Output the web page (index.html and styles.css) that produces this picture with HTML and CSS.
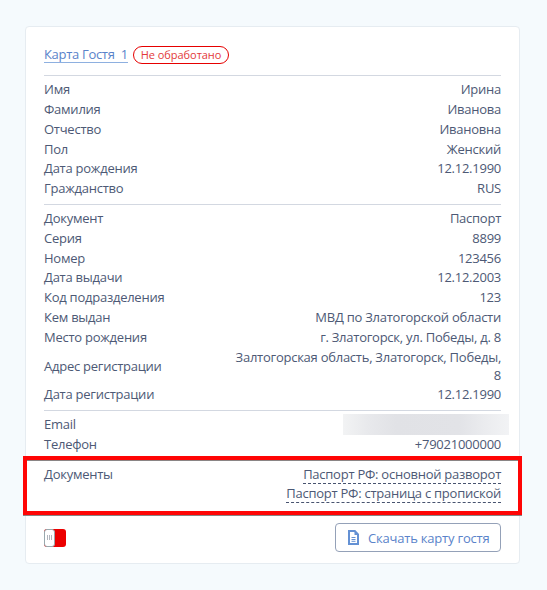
FILE: index.html
```html
<!DOCTYPE html>
<html lang="ru">
<head>
<meta charset="utf-8">
<title>Карта Гостя</title>
<link rel="stylesheet" href="styles.css">
</head>
<body>
<main class="card">
  <header class="head">
    <a class="title">Карта Гостя&nbsp; 1</a>
    <span class="badge">Не обработано</span>
  </header>
  <section class="group person">
    <div class="row"><span>Имя</span><span class="value">Ирина</span></div>
    <div class="row"><span>Фамилия</span><span class="value">Иванова</span></div>
    <div class="row"><span>Отчество</span><span class="value">Ивановна</span></div>
    <div class="row"><span>Пол</span><span class="value">Женский</span></div>
    <div class="row"><span>Дата рождения</span><span class="value">12.12.1990</span></div>
    <div class="row"><span>Гражданство</span><span class="value">RUS</span></div>
  </section>
  <section class="group passport">
    <div class="row"><span>Документ</span><span class="value">Паспорт</span></div>
    <div class="row"><span>Серия</span><span class="value">8899</span></div>
    <div class="row"><span>Номер</span><span class="value">123456</span></div>
    <div class="row"><span>Дата выдачи</span><span class="value">12.12.2003</span></div>
    <div class="row"><span>Код подразделения</span><span class="value">123</span></div>
    <div class="row"><span>Кем выдан</span><span class="value">МВД по Златогорской области</span></div>
    <div class="row"><span>Место рождения</span><span class="value">г. Златогорск, ул. Победы, д. 8</span></div>
    <div class="row tall"><span>Адрес регистрации</span><span class="value">Залтогорская область, Златогорск, Победы, 8</span></div>
    <div class="row"><span>Дата регистрации</span><span class="value">12.12.1990</span></div>
  </section>
  <section class="group contacts">
    <div class="row"><span>Email</span><span class="masked"></span></div>
    <div class="row"><span>Телефон</span><span class="value">+79021000000</span></div>
  </section>
  <section class="group docs">
    <span>Документы</span>
    <div class="links">
      <a class="doc">Паспорт РФ: основной разворот</a>
      <a class="doc">Паспорт РФ: страница с пропиской</a>
    </div>
    <div class="highlight"></div>
  </section>
  <footer class="foot">
    <span class="toggle"><span class="knob"><i></i><i></i><i></i></span></span>
    <button class="download">
      <svg width="11" height="15" viewBox="0 0 11 15" fill="none" stroke="#6491d4">
        <path d="M1 1H6.8L10 4.4V14H1Z" stroke-width="2"/>
        <path d="M6.5 0.5V5H10.5Z" fill="#6491d4" stroke="none"/>
        <path d="M3.5 7.5H7.5M3.5 9.5H7.5M3.5 11.3H7.5" stroke-width="1"/>
      </svg>
      <span>Скачать карту гостя</span>
    </button>
  </footer>
</main>
</body>
</html>
```
FILE: styles.css
```css
* { box-sizing: border-box; }
body {
  margin: 0;
  padding: 26px 27px 26px 25px;
  background: #f5fafd;
  font: 13px/18px "Open Sans", sans-serif;
  letter-spacing: -0.25px;
  color: #4d5975;
}
.card {
  height: 538px;
  padding: 0 18px;
  background: #fff;
  border: 1px solid #e6ecf1;
  border-radius: 4px;
}
.head {
  display: flex;
  align-items: flex-start;
  height: 48px;
  padding-top: 18px;
}
.title {
  height: 18px;
  margin-right: 5px;
  border-bottom: 1px solid #8eb0e0;
  letter-spacing: -0.31px;
  color: #5a83ca;
  white-space: nowrap;
}
.badge {
  height: 18px;
  margin-top: 1px;
  padding: 0 7px;
  border: 1px solid #e60000;
  border-radius: 9px;
  font-size: 11px;
  line-height: 16px;
  letter-spacing: -0.05px;
  color: #e33a3a;
}
.group {
  padding-top: 4px;
  border-top: 1px solid #d3d8e1;
}
.person { height: 129px; padding-top: 4.3px; }
.passport { height: 206px; }
.contacts { height: 50px; }
.row {
  display: flex;
  justify-content: space-between;
  align-items: center;
  min-height: 19.75px;
  padding-bottom: 1.75px;
}
.tall { padding: 0.75px 0 1px; }
.value {
  max-width: 270px;
  text-align: right;
}
.masked {
  width: 166px;
  height: 21px;
  margin: -1px -8px -2px 0;
  background: linear-gradient(90deg, #f2f3f4, #e8e9ec 15%, #e1e2e6 32%, #e2e3e7 70%, #ebecef 86%, #f2f3f5);
}
.docs {
  position: relative;
  display: flex;
  justify-content: space-between;
  height: 63px;
}
.links {
  display: flex;
  flex-direction: column;
  align-items: flex-end;
}
.doc {
  height: 19px;
  border-bottom: 1px dashed #47536f;
}
.highlight {
  position: absolute;
  inset: -5px -21px auto;
  height: 59px;
  border: 4px solid #ff0505;
  box-shadow: 0 1px 0 #8a8585, inset 0 1px 0 #8a8585;
}
.foot {
  display: flex;
  justify-content: space-between;
  align-items: center;
  height: 29px;
}
.toggle {
  width: 22px;
  height: 18px;
  border-radius: 3px;
  background: #ec0000;
}
.knob {
  display: flex;
  justify-content: center;
  align-items: center;
  gap: 1px;
  width: 11px;
  height: 18px;
  border: 1px solid #98a9ae;
  border-radius: 3px;
  background: #fff;
}
.knob i {
  width: 1px;
  height: 5px;
  background: #b0b5bd;
}
.download {
  display: flex;
  align-items: center;
  gap: 9px;
  width: 166px;
  height: 29px;
  padding: 0 0 0 12px;
  border: 1px solid #94a1b8;
  border-radius: 4px;
  background: #fff;
  font: inherit;
  letter-spacing: -0.2px;
  color: #5a83ca;
  white-space: nowrap;
}
```
